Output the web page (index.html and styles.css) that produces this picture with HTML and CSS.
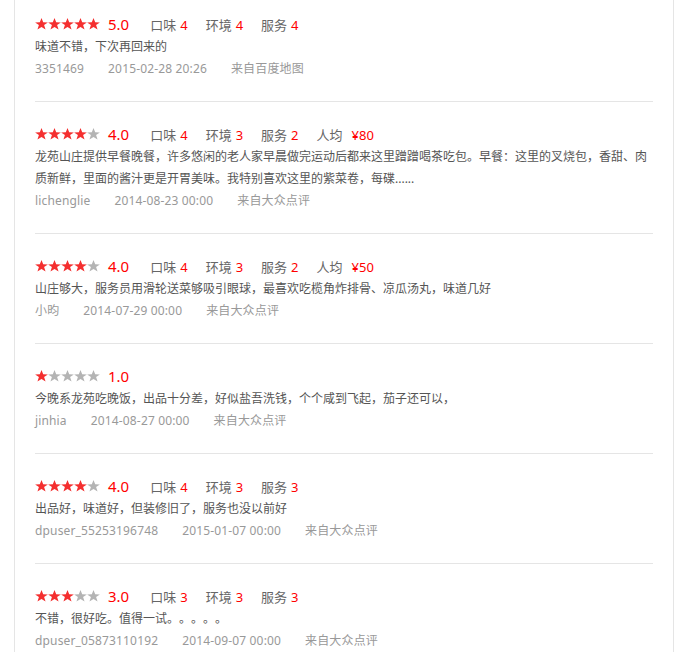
FILE: index.html
```html
<!DOCTYPE html>
<html lang="zh-CN">
<head>
    <meta charset="UTF-8">
    <meta name="viewport" content="width=device-width, initial-scale=1.0">
    <title>评论</title>
    <link rel="stylesheet" href="styles.css">
</head>
<body>
    <div class="reviews">
        <div class="review">
            <div class="rating">
                <span class="stars"><i class="star on"></i><i class="star on"></i><i class="star on"></i><i class="star on"></i><i class="star on"></i></span>
                <span class="score">5.0</span>
                <span class="sub">口味<em>4</em></span>
                <span class="sub">环境<em>4</em></span>
                <span class="sub">服务<em>4</em></span>
            </div>
            <p class="comment">味道不错，下次再回来的</p>
            <div class="meta"><span>3351469</span><span>2015-02-28 20:26</span><span>来自百度地图</span></div>
        </div>

        <div class="review">
            <div class="rating">
                <span class="stars"><i class="star on"></i><i class="star on"></i><i class="star on"></i><i class="star on"></i><i class="star"></i></span>
                <span class="score">4.0</span>
                <span class="sub">口味<em>4</em></span>
                <span class="sub">环境<em>3</em></span>
                <span class="sub">服务<em>2</em></span>
                <span class="sub">人均<em class="price">¥80</em></span>
            </div>
            <p class="comment">龙苑山庄提供早餐晚餐，许多悠闲的老人家早晨做完运动后都来这里蹭蹭喝茶吃包。早餐：这里的叉烧包，香甜、肉质新鲜，里面的酱汁更是开胃美味。我特别喜欢这里的紫菜卷，每碟......</p>
            <div class="meta"><span>lichenglie</span><span>2014-08-23 00:00</span><span>来自大众点评</span></div>
        </div>

        <div class="review">
            <div class="rating">
                <span class="stars"><i class="star on"></i><i class="star on"></i><i class="star on"></i><i class="star on"></i><i class="star"></i></span>
                <span class="score">4.0</span>
                <span class="sub">口味<em>4</em></span>
                <span class="sub">环境<em>3</em></span>
                <span class="sub">服务<em>2</em></span>
                <span class="sub">人均<em class="price">¥50</em></span>
            </div>
            <p class="comment">山庄够大，服务员用滑轮送菜够吸引眼球，最喜欢吃榄角炸排骨、凉瓜汤丸，味道几好</p>
            <div class="meta"><span>小昀</span><span>2014-07-29 00:00</span><span>来自大众点评</span></div>
        </div>

        <div class="review">
            <div class="rating">
                <span class="stars"><i class="star on"></i><i class="star"></i><i class="star"></i><i class="star"></i><i class="star"></i></span>
                <span class="score">1.0</span>
            </div>
            <p class="comment">今晚系龙苑吃晚饭，出品十分差，好似盐吾洗钱，个个咸到飞起，茄子还可以，</p>
            <div class="meta"><span>jinhia</span><span>2014-08-27 00:00</span><span>来自大众点评</span></div>
        </div>

        <div class="review">
            <div class="rating">
                <span class="stars"><i class="star on"></i><i class="star on"></i><i class="star on"></i><i class="star on"></i><i class="star"></i></span>
                <span class="score">4.0</span>
                <span class="sub">口味<em>4</em></span>
                <span class="sub">环境<em>3</em></span>
                <span class="sub">服务<em>3</em></span>
            </div>
            <p class="comment">出品好，味道好，但装修旧了，服务也没以前好</p>
            <div class="meta"><span>dpuser_55253196748</span><span>2015-01-07 00:00</span><span>来自大众点评</span></div>
        </div>

        <div class="review">
            <div class="rating">
                <span class="stars"><i class="star on"></i><i class="star on"></i><i class="star on"></i><i class="star"></i><i class="star"></i></span>
                <span class="score">3.0</span>
                <span class="sub">口味<em>3</em></span>
                <span class="sub">环境<em>3</em></span>
                <span class="sub">服务<em>3</em></span>
            </div>
            <p class="comment">不错，很好吃。值得一试。。。。。</p>
            <div class="meta"><span>dpuser_05873110192</span><span>2014-09-07 00:00</span><span>来自大众点评</span></div>
        </div>
    </div>
</body>
</html>
```

FILE: styles.css
```css
body {
    margin: 0;
    background: #fff;
    font-family: "Noto Sans", "Noto Sans CJK SC", sans-serif;
    color: #555;
    text-spacing-trim: space-all;
}

.reviews {
    width: 618px;
    min-height: 100vh;
    margin-left: 14px;
    padding: 0 20px;
    border-left: 1px solid #e5e5e5;
    border-right: 1px solid #e5e5e5;
}

.review {
    padding: 20px 0 21px;
    border-bottom: 1px solid #e5e5e5;
}

.review:first-child {
    padding-top: 12px;
}

.rating {
    display: flex;
    align-items: center;
    height: 24px;
}

.stars {
    display: flex;
    margin-right: 8px;
}

.star {
    width: 13px;
    height: 12px;
    background: #b4b4b4;
    clip-path: polygon(50% 0%, 63% 36%, 99% 37%, 70% 59%, 81% 96%, 50% 75%, 19% 96%, 30% 59%, 1% 37%, 37% 36%);
}

.star.on {
    background: #f42f2f;
}

.score {
    font-size: 15px;
    color: #f00;
    margin-right: 21px;
}

.sub {
    font-size: 13px;
    color: #666;
    margin-right: 18px;
}

.sub em {
    font-style: normal;
    color: #f00;
    margin-left: 4px;
}

.sub em.price {
    margin-left: 9px;
}

.comment {
    margin: 0;
    font-size: 12px;
    line-height: 22px;
    color: #555;
}

.meta {
    display: flex;
    font-size: 12px;
    line-height: 22px;
    letter-spacing: 0.15px;
    color: #999;
}

.meta span {
    margin-right: 24px;
}
```
